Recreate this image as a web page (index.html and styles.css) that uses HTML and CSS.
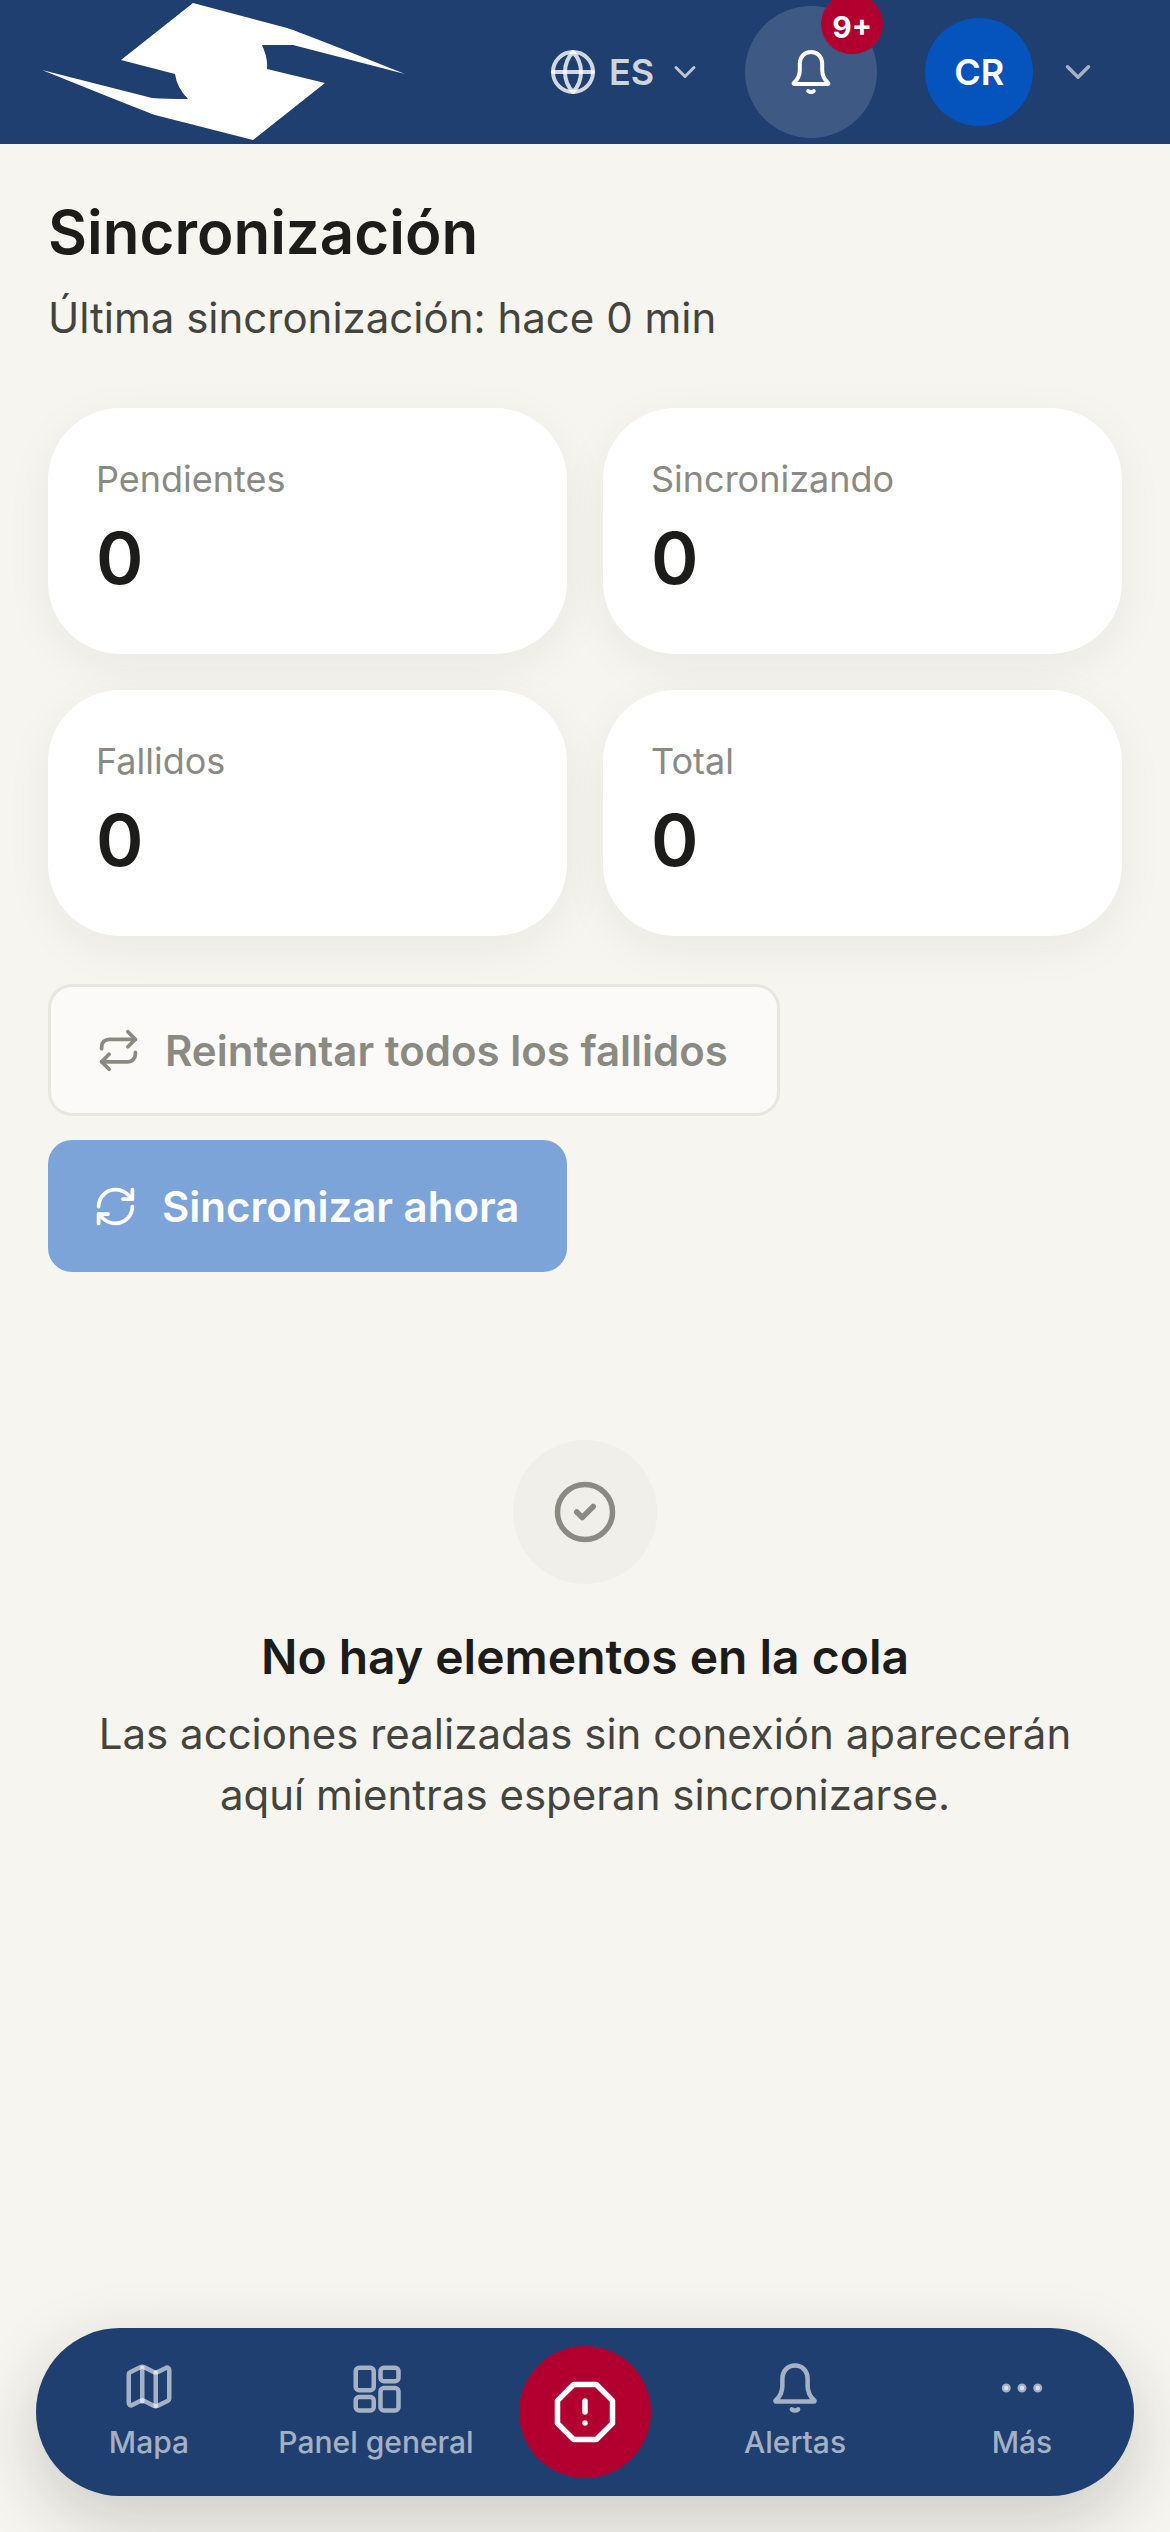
FILE: index.html
```html
<!DOCTYPE html>
<html lang="es">
<head>
    <meta charset="UTF-8">
    <meta name="viewport" content="width=device-width, initial-scale=1.0">
    <title>Sincronización</title>
    <link rel="stylesheet" href="styles.css">
</head>
<body>
    <div class="page">
        <header class="topbar">
            <svg class="logo" viewBox="0 0 420 144">
                <path d="M193 3L287 28Q300 32 405 74L293 45Q285 45 262 45Q268 58 267 69L325 83L253 140L155 115Q146 112 42 70L152 98Q165 99 188 99Q177 88 175 74L121 60Z"/>
            </svg>
            <div class="lang">
                <svg class="icon-globe" viewBox="0 0 24 24"><circle cx="12" cy="12" r="10"/><path d="M12 2a14.5 14.5 0 0 0 0 20 14.5 14.5 0 0 0 0-20"/><path d="M2 12h20"/></svg>
                <span>ES</span>
                <svg class="icon-chevron" viewBox="0 0 24 24"><path d="m6 9 6 6 6-6"/></svg>
            </div>
            <div class="bell-btn">
                <svg class="icon-bell" viewBox="0 0 24 24"><path d="M12 2C8.600 2 6.400 4.600 6.400 8v3c0 2.600-1 4.800-3 6.500-.2.200-.1.500.2.500h16.800c.3 0 .4-.3.2-.5-2-1.700-3-3.900-3-6.500V8c0-3.400-2.200-6-5.600-6z"/><path d="M10.600 21.500c.8.600 2 .6 2.800 0"/></svg>
                <span class="badge">9+</span>
            </div>
            <div class="avatar">CR</div>
            <svg class="icon-chevron user-chevron" viewBox="0 0 24 24"><path d="m6 9 6 6 6-6"/></svg>
        </header>

        <main class="content">
            <h1>Sincronización</h1>
            <p class="subtitle">Última sincronización: hace 0 min</p>

            <div class="stats">
                <div class="stat"><small>Pendientes</small><strong>0</strong></div>
                <div class="stat"><small>Sincronizando</small><strong>0</strong></div>
                <div class="stat"><small>Fallidos</small><strong>0</strong></div>
                <div class="stat"><small>Total</small><strong>0</strong></div>
            </div>

            <div class="actions">
                <button class="btn btn-retry">
                    <svg viewBox="0 0 24 24"><path d="m17 2 4 4-4 4"/><path d="M3 11v-1a4 4 0 0 1 4-4h14"/><path d="m7 22-4-4 4-4"/><path d="M21 13v1a4 4 0 0 1-4 4H3"/></svg>
                    <span>Reintentar todos los fallidos</span>
                </button>
                <button class="btn btn-sync">
                    <svg viewBox="0 0 24 24"><path d="M3 12a9 9 0 0 1 9-9 9.750 9.750 0 0 1 6.740 2.740L21 8"/><path d="M21 3v5h-5"/><path d="M21 12a9 9 0 0 1-9 9 9.750 9.750 0 0 1-6.740-2.740L3 16"/><path d="M8 16H3v5"/></svg>
                    <span>Sincronizar ahora</span>
                </button>
            </div>

            <div class="empty">
                <div class="empty-icon">
                    <svg viewBox="0 0 24 24"><circle cx="12" cy="12" r="10"/><path d="m9 12 2 2 4-4"/></svg>
                </div>
                <h2>No hay elementos en la cola</h2>
                <p>Las acciones realizadas sin conexión aparecerán aquí mientras esperan sincronizarse.</p>
            </div>
        </main>

        <nav class="tabbar">
            <div class="tab">
                <svg viewBox="0 0 24 24"><path d="M14.100 4.900a2 2 0 0 0 1.800 0l3.600-1.800a1 1 0 0 1 1.500.9v12.800a1 1 0 0 1-.6.900l-4.500 2.200a2 2 0 0 1-1.800 0l-4.200-2.100a2 2 0 0 0-1.800 0l-3.600 1.800a1 1 0 0 1-1.500-.9V5.900a1 1 0 0 1 .6-.9l4.500-2.200a2 2 0 0 1 1.800 0z"/><path d="M15 5v15"/><path d="M9 3v15"/></svg>
                <span>Mapa</span>
            </div>
            <div class="tab">
                <svg viewBox="0 0 24 24"><rect x="3" y="3" width="8" height="10" rx="1.500"/><rect x="14" y="3" width="8" height="6" rx="1.500"/><rect x="14" y="12" width="8" height="10" rx="1.500"/><rect x="3" y="16" width="8" height="6" rx="1.500"/></svg>
                <span>Panel general</span>
            </div>
            <div class="alert-btn">
                <svg viewBox="0 0 24 24"><polygon points="7.860 2 16.140 2 22 7.860 22 16.140 16.140 22 7.860 22 2 16.140 2 7.860"/><path d="M12 8v4"/><path d="M12 16h.01"/></svg>
            </div>
            <div class="tab">
                <svg viewBox="0 0 24 24"><path d="M12 2C8.600 2 6.400 4.600 6.400 8v3c0 2.600-1 4.800-3 6.500-.2.200-.1.500.2.500h16.800c.3 0 .4-.3.2-.5-2-1.700-3-3.900-3-6.500V8c0-3.400-2.200-6-5.600-6z"/><path d="M10.600 21.500c.8.600 2 .6 2.800 0"/></svg>
                <span>Alertas</span>
            </div>
            <div class="tab">
                <svg class="dots" viewBox="0 0 24 24"><circle cx="5" cy="12" r="1"/><circle cx="12" cy="12" r="1"/><circle cx="19" cy="12" r="1"/></svg>
                <span>Más</span>
            </div>
        </nav>
    </div>
</body>
</html>
```

FILE: styles.css
```css
* {
    box-sizing: border-box;
}

body {
    margin: 0;
    font-family: Inter, "Noto Sans", sans-serif;
    background-color: #f6f5f0;
    color: #1c1c1a;
}

svg {
    fill: none;
    stroke: currentColor;
    stroke-width: 2;
    stroke-linecap: round;
    stroke-linejoin: round;
    flex-shrink: 0;
}

.page {
    height: 2532px;
    display: flex;
    flex-direction: column;
    overflow: hidden;
}

/* top bar */
.topbar {
    height: 144px;
    background-color: #1f3f70;
    display: flex;
    align-items: center;
    flex-shrink: 0;
}

.logo {
    width: 420px;
    height: 144px;
    fill: #fff;
    stroke: none;
}

.lang {
    display: flex;
    align-items: center;
    margin-left: 129px;
    color: rgba(255, 255, 255, 0.8);
    font-size: 36px;
    font-weight: 600;
}

.icon-globe {
    width: 48px;
    height: 48px;
    margin-right: 12px;
}

.icon-chevron {
    width: 36px;
    height: 36px;
    color: rgba(255, 255, 255, 0.7);
}

.lang .icon-chevron {
    margin-left: 13px;
}

.bell-btn {
    position: relative;
    width: 132px;
    height: 132px;
    margin-left: 42px;
    border-radius: 50%;
    background-color: rgba(255, 255, 255, 0.14);
    color: #fff;
    display: flex;
    align-items: center;
    justify-content: center;
}

.icon-bell {
    width: 48px;
    height: 48px;
}

.badge {
    position: absolute;
    top: -12px;
    right: -6px;
    width: 62px;
    height: 60px;
    padding-top: 6px;
    border-radius: 30px;
    background-color: #b10030;
    color: #fff;
    font-size: 30px;
    font-weight: 700;
    display: flex;
    align-items: center;
    justify-content: center;
}

.avatar {
    width: 108px;
    height: 108px;
    margin-left: 48px;
    border-radius: 50%;
    background-color: #0554be;
    color: #fff;
    font-size: 36px;
    font-weight: 600;
    display: flex;
    align-items: center;
    justify-content: center;
}

.user-chevron {
    width: 42px;
    height: 42px;
    margin-left: 24px;
    color: rgba(255, 255, 255, 0.6);
}

/* main */
.content {
    flex: 1;
    padding: 52px 48px 0;
}

h1 {
    margin: 0;
    font-size: 60px;
    line-height: 72px;
    font-weight: 600;
}

.subtitle {
    margin: 20px 0 0;
    font-size: 42px;
    line-height: 60px;
    color: #44443f;
}

.stats {
    display: grid;
    grid-template-columns: 519px 519px;
    grid-auto-rows: 246px;
    gap: 36px;
    margin-top: 60px;
}

.stat {
    background-color: #fff;
    border-radius: 72px;
    padding: 47px 48px;
    box-shadow: 0 12px 48px rgba(40, 40, 30, 0.06);
}

.stat small {
    display: block;
    font-size: 36px;
    line-height: 48px;
    color: #8a8a83;
}

.stat strong {
    display: block;
    margin-top: 13px;
    font-size: 72px;
    line-height: 84px;
    font-weight: 600;
}

.actions {
    display: flex;
    flex-direction: column;
    align-items: flex-start;
    gap: 24px;
    margin-top: 48px;
}

.btn {
    display: flex;
    align-items: center;
    gap: 24px;
    height: 132px;
    padding: 0 45px;
    border-radius: 24px;
    font-family: inherit;
    font-size: 42px;
    font-weight: 600;
    white-space: nowrap;
}

.btn svg {
    width: 45px;
    height: 45px;
}

.btn-retry {
    width: 732px;
    background-color: #fbfaf8;
    border: 3px solid #e7e6e0;
    color: #8a8a83;
}

.btn-sync {
    width: 519px;
    background-color: #7da4d8;
    border: none;
    color: #fff;
}

.empty {
    margin-top: 168px;
    display: flex;
    flex-direction: column;
    align-items: center;
    text-align: center;
}

.empty-icon {
    width: 144px;
    height: 144px;
    border-radius: 50%;
    background-color: #f1efea;
    color: #8a8a83;
    display: flex;
    align-items: center;
    justify-content: center;
}

.empty-icon svg {
    width: 66px;
    height: 66px;
}

.empty h2 {
    margin: 43px 0 0;
    font-size: 48px;
    line-height: 60px;
    font-weight: 600;
}

.empty p {
    margin: 16px 0 0;
    width: 1000px;
    font-size: 42px;
    line-height: 61px;
    color: #44443f;
}

/* bottom bar */
.tabbar {
    height: 168px;
    margin: 0 36px 36px;
    flex-shrink: 0;
    border-radius: 84px;
    background-color: #1f3f70;
    box-shadow: 0 24px 72px rgba(30, 30, 20, 0.2);
    display: grid;
    grid-template-columns: 226px 228px 190px 230px 224px;
    align-items: center;
}

.tab {
    display: flex;
    flex-direction: column;
    align-items: center;
    color: rgba(255, 255, 255, 0.6);
    font-size: 30px;
    font-weight: 500;
    line-height: 42px;
}

.tab svg {
    width: 54px;
    height: 54px;
    margin-bottom: 6px;
}

.tab .dots {
    fill: currentColor;
}

.alert-btn {
    justify-self: center;
    width: 132px;
    height: 132px;
    border-radius: 50%;
    background-color: #b10030;
    color: #fff;
    display: flex;
    align-items: center;
    justify-content: center;
}

.alert-btn svg {
    width: 66px;
    height: 66px;
}
```
